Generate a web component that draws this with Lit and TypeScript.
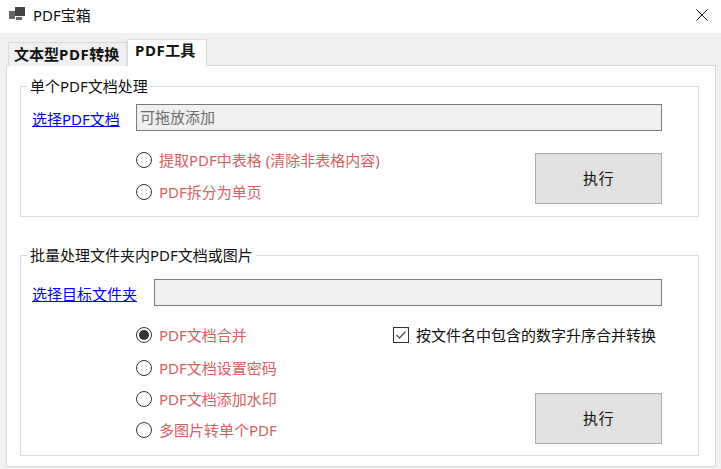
import { LitElement, css, html } from "lit";
import { customElement } from "lit/decorators.js";

@customElement("app-root")
export class AppRoot extends LitElement {
  static styles = css`
    :host {
      display: block;
      height: 469px;
      overflow: hidden;
      background: #f0f0f0;
      color: #111;
      font-family: "Noto Sans", "Noto Sans CJK SC", sans-serif;
      font-size: 15px;
      line-height: 20px;
    }
    .titlebar {
      height: 33px;
      box-sizing: border-box;
      background: #fff;
      display: flex;
      align-items: center;
      padding: 0 13px 3px 9px;
    }
    .logo {
      display: block;
      margin-right: 8px;
    }
    .title {
      flex: 1;
    }
    .close {
      display: block;
    }
    .tabs {
      display: flex;
      align-items: flex-end;
      height: 33px;
      padding-left: 8px;
      margin-bottom: -1px;
    }
    .tab {
      font-weight: 700;
      box-sizing: border-box;
      border: 1px solid #d9d9d9;
      border-bottom: none;
      white-space: nowrap;
    }
    .tab span {
      letter-spacing: 0.6px;
    }
    .tab.off {
      width: 119px;
      height: 24px;
      line-height: 22px;
      padding-left: 5px;
      background: #f0f0f0;
    }
    .tab.on {
      width: 80px;
      height: 27px;
      line-height: 20px;
      padding-left: 7px;
      background: #fff;
      position: relative;
      z-index: 1;
    }
    .panel {
      box-sizing: border-box;
      width: 710px;
      height: 402px;
      margin-left: 6px;
      background: #fff;
      border: 1px solid #d9d9d9;
      padding: 10px 16px 0 13px;
    }
    fieldset {
      margin: 0;
      padding: 0 36px 0 10px;
      border: 1px solid #dcdcdc;
      min-width: 0;
    }
    fieldset + fieldset {
      margin-top: 28px;
    }
    legend {
      margin-left: -4px;
      padding: 0 3px;
      line-height: 20px;
    }
    .picker {
      display: flex;
      align-items: center;
      height: 27px;
    }
    .one .picker {
      margin-top: 8px;
    }
    .two .picker {
      margin-top: 14px;
    }
    a {
      box-sizing: border-box;
      padding: 2px 0 0 1px;
      color: #0000ff;
      text-decoration: underline;
      white-space: nowrap;
    }
    .one a {
      width: 105px;
    }
    .two a {
      width: 123px;
    }
    .field {
      flex: 1;
      box-sizing: border-box;
      height: 27px;
      background: #f0f0f0;
      border: 1px solid #7a7a7a;
      color: #6d6d6d;
      padding: 0 3px;
      line-height: 25px;
    }
    .options {
      display: flex;
      justify-content: space-between;
      padding-left: 105px;
    }
    .radios {
      display: flex;
      flex-direction: column;
      margin-top: 19px;
    }
    .one .radios {
      gap: 12px;
    }
    .two .radios {
      gap: 11px;
    }
    .two .radio:first-child {
      margin-bottom: 2px;
    }
    .radio {
      display: flex;
      align-items: center;
      gap: 7px;
      height: 20px;
      color: #d9605f;
      white-space: nowrap;
    }
    .dot {
      box-sizing: border-box;
      width: 16px;
      height: 16px;
      border: 1px solid #333;
      border-radius: 50%;
      display: flex;
      align-items: center;
      justify-content: center;
    }
    .dot.checked::after {
      content: "";
      width: 10px;
      height: 10px;
      border-radius: 50%;
      background: #333;
    }
    button {
      display: block;
      box-sizing: border-box;
      width: 127px;
      height: 51px;
      background: #e1e1e1;
      border: 1px solid #adadad;
      border-radius: 0;
      padding: 0 0 2px;
      color: #111;
      font: inherit;
      letter-spacing: 0.5px;
    }
    .one button {
      margin: 22px 0 12px;
    }
    .side {
      width: 269px;
      display: flex;
      flex-direction: column;
      align-items: flex-end;
      margin-top: 19px;
    }
    .check {
      align-self: flex-start;
      display: flex;
      align-items: center;
      gap: 7px;
      height: 20px;
      white-space: nowrap;
    }
    .box {
      display: block;
    }
    .two button {
      margin: 48px 0 11px;
    }
  `;

  render() {
    return html`
      <div class="titlebar">
        <svg class="logo" width="16" height="16" viewBox="0 0 16 16">
          <rect x="0" y="4" width="6" height="8" fill="#666"></rect>
          <rect x="6" y="0" width="10" height="9" fill="#444"></rect>
          <rect x="7" y="10" width="6" height="3" fill="#666"></rect>
        </svg>
        <span class="title">PDF宝箱</span>
        <svg class="close" width="12" height="12" viewBox="0 0 12 12">
          <path d="M.5.5l11 11M11.5.5l-11 11" stroke="#111" fill="none"></path>
        </svg>
      </div>
      <div class="tabs">
        <div class="tab off">文本型<span>PDF</span>转换</div>
        <div class="tab on"><span>PDF</span>工具</div>
      </div>
      <div class="panel">
        <fieldset class="one">
          <legend>单个PDF文档处理</legend>
          <div class="picker">
            <a href="#">选择PDF文档</a>
            <div class="field">可拖放添加</div>
          </div>
          <div class="options">
            <div class="radios">
              <label class="radio"><span class="dot"></span>提取PDF中表格 (清除非表格内容)</label>
              <label class="radio"><span class="dot"></span>PDF拆分为单页</label>
            </div>
            <button>执行</button>
          </div>
        </fieldset>
        <fieldset class="two">
          <legend>批量处理文件夹内PDF文档或图片</legend>
          <div class="picker">
            <a href="#">选择目标文件夹</a>
            <div class="field"></div>
          </div>
          <div class="options">
            <div class="radios">
              <label class="radio"><span class="dot checked"></span>PDF文档合并</label>
              <label class="radio"><span class="dot"></span>PDF文档设置密码</label>
              <label class="radio"><span class="dot"></span>PDF文档添加水印</label>
              <label class="radio"><span class="dot"></span>多图片转单个PDF</label>
            </div>
            <div class="side">
              <label class="check">
                <svg class="box" width="16" height="16" viewBox="0 0 16 16">
                  <rect x=".5" y=".5" width="15" height="15" fill="#fff" stroke="#333"></rect>
                  <path d="M3.5 8l3 3 6-6.5" fill="none" stroke="#555" stroke-width="1.3"></path>
                </svg>
                按文件名中包含的数字升序合并转换
              </label>
              <button>执行</button>
            </div>
          </div>
        </fieldset>
      </div>
    `;
  }
}
